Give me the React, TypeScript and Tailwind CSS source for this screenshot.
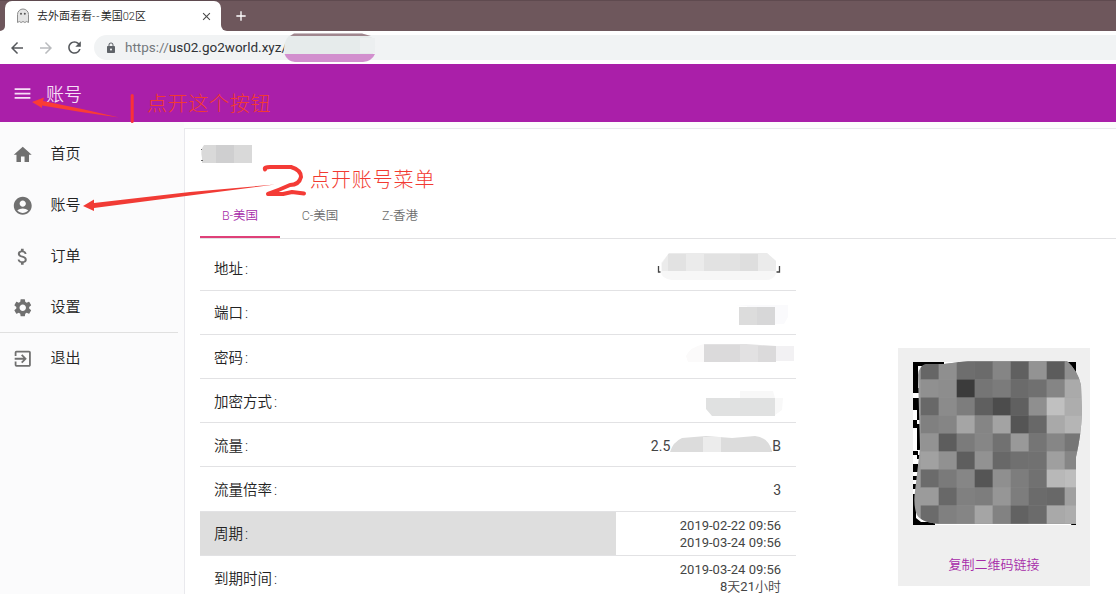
import React from 'react';
import {
  MdAccountCircle,
  MdAdd,
  MdArrowBack,
  MdArrowForward,
  MdAttachMoney,
  MdClose,
  MdExitToApp,
  MdHome,
  MdLock,
  MdMenu,
  MdRefresh,
  MdSettings,
} from 'react-icons/md';

const navItems = [
  { label: '首页', Icon: MdHome },
  { label: '账号', Icon: MdAccountCircle },
  { label: '订单', Icon: MdAttachMoney },
  { label: '设置', Icon: MdSettings },
];

const mosaic = [
  '666666 8f8f8f 6e6e6e 6b6b6b 858585 606060 939393 5c5c5c 8f8f8f',
  '909090 8d8d8d 3b3b3b 757575 7b7b7b 6b6b6b 707070 858585 aaaaaa',
  '686868 8b8b8b 7d7d7d 5f5f5f 4c4c4c 606060 8f8f8f c0c0c0 adadad',
  '808080 858585 a5a5a5 858585 a3a3a3 555555 686868 a9a9a9 b5b5b5',
  '939393 5d5d5d 7b7b7b 868686 717171 999999 757575 868686 767676',
  'a1a1a1 919191 5e5e5e 929292 686868 707070 717171 9f9f9f 868686',
  '6b6b6b 7a7a7a 868686 555555 8f8f8f 7d7d7d 717171 b8b8b8 bdbdbd',
  '9b9b9b 686868 808080 7d7d7d 969696 7d7d7d 6b6b6b 686868 a0a0a0',
  '6b6b6b 808080 858585 a5a5a5 828282 626262 6b6b6b a9a9a9 adadad',
].map((line) => line.split(' '));

function BrowserChrome() {
  return (
    <header className="shrink-0">
      <div className="flex h-[31px] items-end bg-[#6e575c] border-t border-[#5f4a4f]">
        <div className="h-[10px] w-[5px] bg-white">
          <div className="h-full w-full rounded-br-[5px] bg-[#6e575c]" />
        </div>
        <div className="flex h-[30px] w-[216px] items-center rounded-t-[7px] bg-white pl-[11px] pr-[8px]">
          <svg className="h-4 w-[14px]" viewBox="0 0 14 16">
            <path d="M1.5 14.5V6.5a5.5 5.5 0 0 1 11 0v8l-1.8-1-1.8 1-1.9-1-1.9 1-1.8-1z" fill="#e4e4e4" stroke="#8d8d8d" />
            <circle cx="5" cy="5.7" r="1" fill="#555" />
            <circle cx="8.8" cy="5.7" r="1" fill="#555" />
          </svg>
          <span className="ml-[7px] mt-[2px] text-[11px] font-[350] text-[#222] whitespace-nowrap">
            去外面看看<span className="tracking-[1.2px]">--</span>美国02区
          </span>
          <MdClose className="ml-auto h-[13px] w-[13px] text-[#4a4a4a]" />
        </div>
        <div className="h-[10px] w-[6px] bg-white">
          <div className="h-full w-full rounded-bl-[6px] bg-[#6e575c]" />
        </div>
        <MdAdd className="mb-[7px] ml-[6px] h-[16px] w-[16px] text-white" />
      </div>
      <div className="flex h-[33px] items-center bg-white pl-[8px]">
        <MdArrowBack className="h-[18px] w-[18px] text-[#55585c]" />
        <MdArrowForward className="ml-[11px] h-[18px] w-[18px] text-[#b9bbbe]" />
        <MdRefresh className="ml-[10px] h-[19px] w-[19px] text-[#55585c]" />
        <div className="ml-[10px] flex h-[25px] flex-1 items-center rounded-l-full bg-[#f1f3f4] pl-[11px]">
          <MdLock className="h-[12px] w-[12px] text-[#5f6368]" />
          <span className="ml-[8px] text-[13.5px] text-[#303236] whitespace-nowrap">
            <span className="text-[#74787c]">https://</span>us02.go2world.xyz/
          </span>
        </div>
      </div>
    </header>
  );
}

function Sidebar() {
  return (
    <nav className="w-[184px] shrink-0 bg-[#fbfbfc] pt-[6px] text-[15px] font-[350] text-[#222]">
      {navItems.map(({ label, Icon }) => (
        <a key={label} className="flex h-[51px] items-center pl-[12px]">
          <Icon className="mt-[3px] h-[21.5px] w-[21.5px] text-[#707070]" />
          <span className="ml-[17px] mt-[2px]">{label}</span>
        </a>
      ))}
      <div className="h-px w-[178px] bg-[#e0e0e0]" />
      <a className="flex h-[51px] items-center pl-[12px]">
        <MdExitToApp className="mt-px h-[21.5px] w-[21.5px] text-[#707070]" />
        <span className="ml-[17px]">退出</span>
      </a>
    </nav>
  );
}

type RowProps = { label: string; children: React.ReactNode; active?: boolean };

function Row({ label, children, active = false }: RowProps) {
  return (
    <div className="flex h-[44.2px] border-b border-[#e2e2e4] text-[14px] text-[#444]">
      <div className={`flex w-[416px] items-center pl-[14px] pt-[4px] text-[14.5px] font-[350] text-[#222] ${active ? 'bg-[#dedede]' : ''}`}>
        {label}<span className="ml-[2px]">:</span>
      </div>
      <div className="flex flex-1 items-center justify-end pr-[15px] text-right leading-[17px]">{children}</div>
    </div>
  );
}

function Details() {
  return (
    <div className="w-[596px] shrink-0 pt-[7.5px]">
      <Row label="地址">
        <svg className="mt-[-3px] h-[28px] w-[124px]" viewBox="0 0 124 28">
          <path d="M1.5 13v6h2M122.5 13v6h-3" fill="none" stroke="#444" strokeWidth="1.3" />
          <path d="M12 0h98l9 8v13q-3 6-10 6H15Q4 26 4 18V10z" fill="#f7f7f7" />
          <path d="M12 0h98l9 8v10H5V10z" fill="#ebebeb" />
          <path d="M11 1h18v17H11zM47 1h36v17H47z" fill="#e2e2e2" />
          <path d="M83 1h18v17H83z" fill="#dedede" />
        </svg>
      </Row>
      <Row label="端口">
        <svg className="mr-[-10px] mt-[8px] h-[22px] w-[56px]" viewBox="0 0 56 22">
          <path d="M0 0h53v12l-4 7H12V1z" fill="#fafafc" />
          <path d="M4 2h18v18H4z" fill="#dcdcdc" />
          <path d="M22 2h18v18H22z" fill="#d7d7d8" />
        </svg>
      </Row>
      <Row label="密码">
        <svg className="mr-[-14px] mt-[-7px] h-[20px] w-[109px]" viewBox="0 0 109 20">
          <path d="M0 13Q4 4 18 1v18H2z" fill="#fbfafa" />
          <path d="M18 1l42 0 30 2v16H18z" fill="#e2e1e2" />
          <path d="M18 2h36v17H18zM72 3h18v16H72z" fill="#dbdadb" />
          <path d="M90 3h18v15H90z" fill="#f2f1f3" />
        </svg>
      </Row>
      <Row label="加密方式">
        <svg className="mr-[-3px] mt-[7px] h-[26px] w-[79px]" viewBox="0 0 79 26">
          <path d="M35 0h33l2 7h8l-1 12-7 5V7H35z" fill="#f8f8f8" />
          <path d="M1 7h69v18H7L1 18z" fill="#e0e1e1" />
        </svg>
      </Row>
      <Row label="流量">
        <span className="pt-[3px]">2.5</span>
        <svg className="mt-[-1px] h-[17px] w-[102px]" viewBox="0 0 102 17">
          <path d="M0 16Q3 6 12 2L36 0 62 2 85 0Q98 1 102 15v1z" fill="#dcdcdc" />
          <path d="M33 1h18v15H33z" fill="#ececec" />
        </svg>
        <span className="pt-[3px]">B</span>
      </Row>
      <Row label="流量倍率"><span className="pt-[2px]">3</span></Row>
      <Row label="周期" active>
        <div className="text-[13px] pt-[2px]">2019-02-22 09:56<br />2019-03-24 09:56</div>
      </Row>
      <Row label="到期时间">
        <div className="text-[13px] pt-[2px]">2019-03-24 09:56<br />8<span className="font-[350]">天</span>21<span className="font-[350]">小时</span></div>
      </Row>
    </div>
  );
}

function QrCode() {
  return (
    <svg className="h-[168px] w-[176px] shrink-0" viewBox="0 0 176 168">
      <defs>
        <clipPath id="smudge">
          <path d="M5 14Q6 4 14 3L31 3 55 0 154 0Q165 10 168 24L169 52Q168 75 163 96V163H28Q9 162 4 154Q0 145 2 130L7 87Z" />
        </clipPath>
      </defs>
      <path d="M0 1h163v163H0z" fill="#fff" />
      <path
        d="M0 1h31v4H5v22h3v5H0zM0 37h8v22H4V49H0zM0 59h4v4h4v26H4V67H0zM0 90h5v4h3v4H4v-4H0zM0 103h5v8H0zM0 115h5v4H0zM0 123h5v5H0zM0 133h3v24l5 4h14v3H0zM45 1h3v4h-3zM51 1h4v4h-4zM155 1h8v12h-8zM160 159h3v5h-5z"
        fill="#000"
      />
      <g clipPath="url(#smudge)">
        <path d="M0 0h176v168H0z" fill="#9b9b9b" />
        {mosaic.map((row, y) =>
          row.map((color, x) => (
            <rect key={`${x}-${y}`} x={7.7 + x * 18} y={0.5 + y * 18} width={18.2} height={18.2} fill={`#${color}`} />
          )),
        )}
      </g>
    </svg>
  );
}

function Annotations() {
  return (
    <div className="pointer-events-none absolute inset-0 font-light text-[#f23a32]">
      <svg className="absolute inset-0 h-full w-full" viewBox="0 0 1116 594">
        <path d="M294 33.5h68l10 4q3 4 3 9t-3 9l-10 6h-68q-9-4-10-12 0-13 10-16z" fill="#e6ebeb" />
        <path d="M290 36l4-2.5h68l9 2.5z" fill="#a0868e" />
        <path d="M284.5 54H375q-3 7-12 8h-68q-8-1-10.5-8z" fill="#d28fce" />
        <path d="M360 38h15v15h-15z" fill="#eceff0" />
        <path d="M32 102L44 97.5 43 101 82 109 119 117.5 81 112 42 105.5 42 108Z" fill="#fa3c35" />
        <path d="M132.2 95.5V121.5" stroke="#fa3238" strokeWidth="3" strokeLinecap="round" />
        <path d="M83 206L94 199.5V203L190 192 275 184.5 190 195.5 94 208V211Z" fill="#f13b35" />
        <path
          d="M265 169.5Q264 167 270 167H291Q301 170 301 177Q299 185 290 185Q279 190 268 194H283L292 192L304 193.5"
          fill="none" stroke="#f43b36" strokeWidth="4" strokeLinecap="round" strokeLinejoin="round"
        />
        <path d="M204 145h48v18h-50v-5q-2-8 2-13z" fill="#d9d9d9" />
        <path d="M216 145h18v18h-18z" fill="#cfcfd0" />
        <path d="M201 149.5h1M201 160.5h2" stroke="#666" />
      </svg>
      <span className="absolute left-[147px] top-[90px] text-[20px] leading-[28px] tracking-[0.7px] whitespace-nowrap">点开这个按钮</span>
      <span className="absolute left-[310px] top-[166px] text-[20px] leading-[28px] tracking-[0.9px] whitespace-nowrap">点开账号菜单</span>
    </div>
  );
}

export default function App() {
  return (
    <div className="relative flex h-[594px] w-[1116px] flex-col overflow-hidden bg-[#fdfdfd] font-[Roboto,'Noto_Sans_CJK_SC',sans-serif]">
      <BrowserChrome />
      <div className="flex h-[58px] shrink-0 items-center bg-[#aa1fa9] pl-[12px] text-[#f7dff7]">
        <MdMenu className="h-[21px] w-[21px]" />
        <h1 className="ml-[13px] mt-[2px] text-[18px] font-[350]">账号</h1>
      </div>
      <div className="flex min-h-0 flex-1">
        <Sidebar />
        <main className="mt-[6px] flex-1 border-l border-t border-[#e9e9ed] bg-white pl-[15px]">
          <div className="h-[64px]" />
          <div className="flex h-[46px] border-b border-[#e2e2e4] text-[12.5px] font-[350] text-[#6c6c6c]">
            <div className="flex w-[80px] items-center justify-center border-b-2 border-[#df4079] pt-[3px] text-[#a62aa8]">B-美国</div>
            <div className="flex w-[80px] items-center justify-center pt-[2px]">C-美国</div>
            <div className="flex w-[80px] items-center justify-center pt-[2px]">Z-香港</div>
          </div>
          <div className="flex">
            <Details />
            <aside className="ml-[102px] mt-[109px] flex h-[238px] w-[192px] flex-col items-center bg-[#efefef] pt-[13px] pl-[15px]">
              <div className="flex w-full"><QrCode /></div>
              <button className="mr-[15px] mt-[26px] text-[13px] font-[350] leading-[20px] text-[#a62aa8]">复制二维码链接</button>
            </aside>
          </div>
        </main>
      </div>
      <Annotations />
    </div>
  );
}
